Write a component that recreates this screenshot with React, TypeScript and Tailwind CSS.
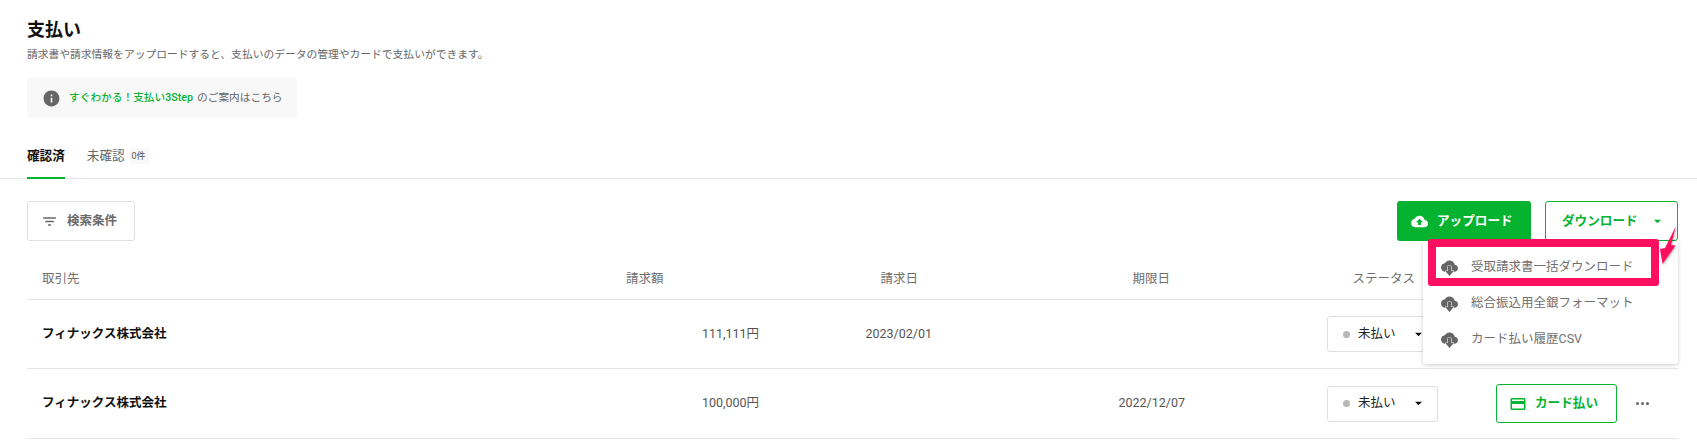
import type { ReactNode } from "react";

const cloudUp =
  "M19.35 10.04C18.67 6.59 15.64 4 12 4 9.11 4 6.6 5.64 5.35 8.04 2.34 8.36 0 10.91 0 14c0 3.31 2.69 6 6 6h13c2.76 0 5-2.24 5-5 0-2.64-2.05-4.78-4.65-4.96zM14 13v4h-4v-4H7l5-5 5 5h-3z";
const cloudBody =
  "M19.35 8.04C18.67 4.59 15.64 2 12 2 9.11 2 6.6 3.64 5.35 6.04 2.34 6.36 0 8.91 0 12c0 3.31 2.69 6 6 6h13c2.76 0 5-2.24 5-5 0-2.64-2.05-4.78-4.65-4.96z";

const cols = "grid-cols-[584px_133px_173px_253px_253px_1fr]";

function Icon({ d, className }: { d: string; className: string }) {
  return (
    <svg viewBox="0 0 24 24" fill="currentColor" className={className}>
      <path d={d} />
    </svg>
  );
}

// cloud with a white-edged arrow that hangs below it
function CloudDownload() {
  return (
    <svg viewBox="0 0 24 24" className="w-[17px] h-[17px] text-[#666]" fill="currentColor">
      <path d={cloudBody} />
      <path d="M9.5 10h5v7h3.5L12 24l-6-7h3.5z" stroke="#fff" strokeWidth="1.4" paintOrder="stroke" />
    </svg>
  );
}

function Caret({ className }: { className: string }) {
  return (
    <svg viewBox="0 0 8 5" fill="currentColor" className={className}>
      <path d="M0 0.5h8L4 4.5z" />
    </svg>
  );
}

function StatusSelect() {
  return (
    <div className="flex items-center h-[36px] w-[111px] border border-[#dfdfdf] rounded-[3px] bg-white pl-[15px]">
      <span className="w-[7px] h-[7px] rounded-full bg-[#b7b7b7]" />
      <span className="ml-[8px] text-[12.5px] text-[#222]">未払い</span>
      <Caret className="w-[7px] h-[5px] ml-[19px] text-[#111]" />
    </div>
  );
}

function Row({ amount, date, due, action, height }: { amount: string; date?: string; due?: string; action?: ReactNode; height: string }) {
  return (
    <div className={`grid ${cols} items-center ${height} border-b border-[#e5e5e5] pl-[15px] text-[12.5px] text-[#555]`}>
      <div className="font-bold text-[#111]">フィナックス株式会社</div>
      <div className="text-right">{amount}</div>
      <div className="text-right">{date}</div>
      <div className="text-right">{due}</div>
      <div className="flex justify-end"><StatusSelect /></div>
      <div>{action}</div>
    </div>
  );
}

function MenuItem({ label }: { label: string }) {
  return (
    <div className="flex items-center h-[36px] pl-[18px] text-[12.5px] text-[#6f6f6f]">
      <CloudDownload />
      <span className="ml-[13px]">{label}</span>
    </div>
  );
}

export default function App() {
  return (
    <div className="h-[447px] overflow-hidden bg-white font-['Roboto','Noto_Sans_CJK_JP',sans-serif]">
      <div className="px-[27px] pt-[18px]">
        <h1 className="text-[18px] leading-[24px] font-bold text-[#111]">支払い</h1>
        <p className="mt-[5px] text-[10.78px] leading-[16px] text-[#666]">
          請求書や請求情報をアップロードすると、支払いのデータの管理やカードで支払いができます。
        </p>
        <div className="mt-[15px] flex items-center w-[270px] h-[40px] rounded-[3px] bg-[#f8f8f8] pl-[15px] text-[10.7px]">
          <Icon d="M12 2C6.48 2 2 6.48 2 12s4.48 10 10 10 10-4.48 10-10S17.52 2 12 2zm1 15h-2v-6h2v6zm0-8h-2V7h2v2z" className="w-[19px] h-[19px] text-[#666]" />
          <span className="ml-[8px] font-medium text-[#06b330]">すぐわかる！支払い3Step</span>
          <span className="ml-[4px] text-[#666]">のご案内はこちら</span>
        </div>
      </div>

      <div className="mt-[27px] flex h-[34px] items-start border-b border-[#e5e5e5] px-[27px]">
        <div className="h-[34px] border-b-2 border-[#06b330] text-[12.6px] leading-[22px] font-bold text-[#111]">確認済</div>
        <div className="ml-[22px] text-[12.6px] leading-[22px] text-[#666]">未確認</div>
        <div className="ml-[4px] mt-[3px] h-[16px] px-[3px] rounded-[2px] bg-[#f8f8f8] text-[9px] leading-[17px] text-[#555]">0件</div>
      </div>

      <div className="mt-[22px] flex items-center justify-between pr-[19px] pl-[27px]">
        <div className="flex items-center w-[108px] h-[40px] border border-[#dfdfdf] rounded-[3px] pl-[13px] text-[12.5px] font-bold text-[#6a6a6a]">
          <Icon d="M10 18h4v-2h-4v2zM3 6v2h18V6H3zm3 7h12v-2H6v2z" className="w-[17px] h-[17px] text-[#666]" />
          <span className="ml-[9px]">検索条件</span>
        </div>
        <div className="flex gap-[14px]">
          <div className="flex items-center w-[134px] h-[40px] rounded-[3px] bg-[#06b330] pl-[14px] text-[12.6px] font-bold text-white">
            <Icon d={cloudUp} className="w-[17px] h-[17px]" />
            <span className="ml-[9px]">アップロード</span>
          </div>
          <div className="relative flex items-center w-[133px] h-[40px] rounded-[3px] border border-[#06b330] bg-white pl-[16px] text-[12.6px] font-bold text-[#06b330]">
            <span>ダウンロード</span>
            <Caret className="w-[7px] h-[5px] ml-[16px]" />

            <div className="absolute z-10 top-[39px] right-[-1px] w-[255px] h-[123px] rounded-b-[3px] bg-white shadow-[0_1px_4px_rgba(0,0,0,0.2)] pt-[8px] font-normal">
              <MenuItem label="受取請求書一括ダウンロード" />
              <MenuItem label="総合振込用全銀フォーマット" />
              <MenuItem label="カード払い履歴CSV" />
              <div className="absolute left-[5px] top-[-2px] w-[231px] h-[47px] rounded-[3px] border-[8px] border-[#ff0f5f]" />
            </div>
            <svg viewBox="0 0 16 38" className="absolute z-20 left-[114px] top-[24px] w-[16px] h-[38px] drop-shadow-[1px_1px_1px_rgba(0,0,0,0.3)]" fill="#ff0f5f">
              <path d="M16 0 11 19 15.5 19.5 2.5 38 0 23 5 22z" />
            </svg>
          </div>
        </div>
      </div>

      <div className="mx-[27px] mt-[18px] w-[1651px]">
        <div className={`grid ${cols} items-center h-[41px] border-b border-[#e5e5e5] pl-[15px] text-[12.5px] text-[#6f6f6f]`}>
          <div>取引先</div>
          <div>請求額</div>
          <div className="text-right pr-[14px]">請求日</div>
          <div className="text-right pr-[15px]">期限日</div>
          <div className="text-right pr-[23px]">ステータス</div>
          <div />
        </div>
        <Row height="h-[69px]" amount="111,111円" date="2023/02/01" />
        <Row
          height="h-[70px]"
          amount="100,000円"
          due="2022/12/07"
          action={
            <div className="flex items-center">
              <div className="ml-[58px] flex items-center w-[121px] h-[39px] shrink-0 rounded-[3px] border border-[#06b330] pl-[12px] text-[12.6px] font-bold text-[#06b330]">
                <Icon d="M20 4H4c-1.11 0-1.99.89-1.99 2L2 18c0 1.11.89 2 2 2h16c1.11 0 2-.89 2-2V6c0-1.11-.89-2-2-2zm0 14H4v-6h16v6zm0-10H4V6h16v2z" className="w-[18px] h-[18px]" />
                <span className="ml-[8px]">カード払い</span>
              </div>
              <div className="ml-[19px] flex gap-[2px]">
                <span className="w-[3px] h-[3px] rounded-full bg-[#666]" />
                <span className="w-[3px] h-[3px] rounded-full bg-[#666]" />
                <span className="w-[3px] h-[3px] rounded-full bg-[#666]" />
              </div>
            </div>
          }
        />
      </div>
    </div>
  );
}
